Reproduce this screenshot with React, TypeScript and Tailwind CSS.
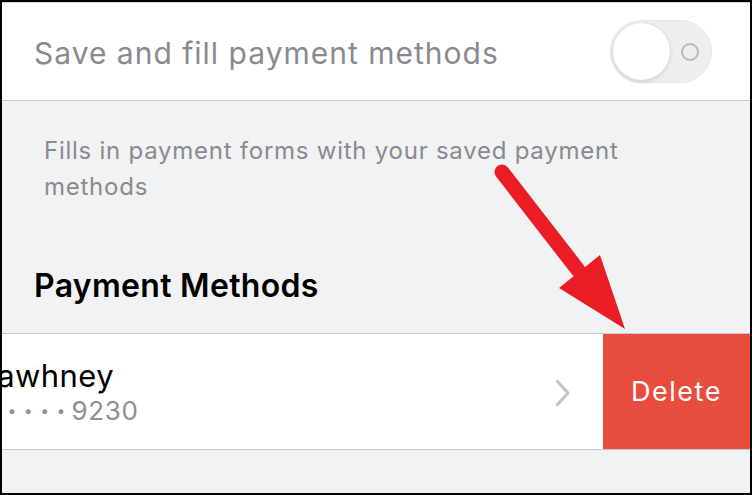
import React from 'react';

const font = { fontFamily: 'Inter, "Liberation Sans", sans-serif' };

const Toggle: React.FC = () => (
  <div className="relative w-[102px] h-[63px] rounded-full bg-[#efeff0] border border-[#e6e6e8] flex items-center shrink-0">
    {/* knob */}
    <div className="w-[57px] h-[57px] rounded-full bg-white ml-[2px] shadow-[0_2px_5px_rgba(0,0,0,0.12),0_0_1px_rgba(0,0,0,0.15)]" />
    {/* off indicator */}
    <div className="ml-[11px] w-[18px] h-[18px] rounded-full border-[2px] border-[#b9b9bc]" />
  </div>
);

export default function App() {
  return (
    <div
      className="relative w-[752px] h-[495px] border-2 border-black bg-[#f1f2f4] overflow-hidden flex flex-col"
      style={font}
    >
      {/* Save and fill row */}
      <div className="h-[99px] bg-white border-t border-[#d6d6da] border-b border-b-[#c8c7cc] flex items-center justify-between pl-[32px] pr-[38px] shrink-0">
        <span className="text-[30px] tracking-[1px] text-[#8a8a8e] leading-none mt-[2px]">Save and fill payment methods</span>
        <Toggle />
      </div>

      {/* Footer text */}
      <div className="pl-[42px] pr-[50px] pt-[32px] text-[24px] leading-[36px] tracking-[0.75px] text-[#8a8a8e]">
        Fills in payment forms with your saved payment methods
      </div>

      {/* Section header */}
      <div className="pl-[32px] pt-[60px] pb-[26px] text-[32px] font-semibold leading-[42px] tracking-[0.3px] text-black">
        Payment Methods
      </div>

      {/* Swiped card row */}
      <div className="h-[117px] flex border-y border-[#c8c7cc] shrink-0">
        <div className="flex-1 bg-white flex items-center overflow-hidden">
          <div className="flex-1 flex flex-col">
            <span className="text-[31px] leading-[38px] tracking-[0.4px] text-black ml-[-25px]">Sawhney</span>
            <span className="flex items-center text-[26px] leading-[32px] tracking-[0.6px] text-[#8e8e93] ml-[2px]">
              {[0, 1, 2, 3].map((i) => (
                <span key={i} className="inline-block w-[16.4px] text-center text-[15px] leading-none">•</span>
              ))}
              <span className="ml-[2px]">9230</span>
            </span>
          </div>
          <svg className="mr-[32px] mt-[2px]" width="16" height="28" viewBox="0 0 16 28" fill="none">
            <path d="M2.5 2.5 L13 14 L2.5 25.5" stroke="#c5c5c8" strokeWidth="3.2" strokeLinecap="round" strokeLinejoin="round" />
          </svg>
        </div>
        <div className="w-[147px] bg-[#e84c3d] flex items-center justify-center">
          <span className="text-[27px] tracking-[1.5px] text-white leading-none">Delete</span>
        </div>
      </div>

      <div className="flex-1" />

      {/* Annotation arrow */}
      <svg className="absolute left-0 top-0 pointer-events-none" width="752" height="495" viewBox="0 0 752 495">
        <line x1="500" y1="170" x2="576" y2="268" stroke="#ea1d25" strokeWidth="15" strokeLinecap="round" />
        <polygon points="557,286 598,253 623,327" fill="#ea1d25" />
      </svg>
    </div>
  );
}
